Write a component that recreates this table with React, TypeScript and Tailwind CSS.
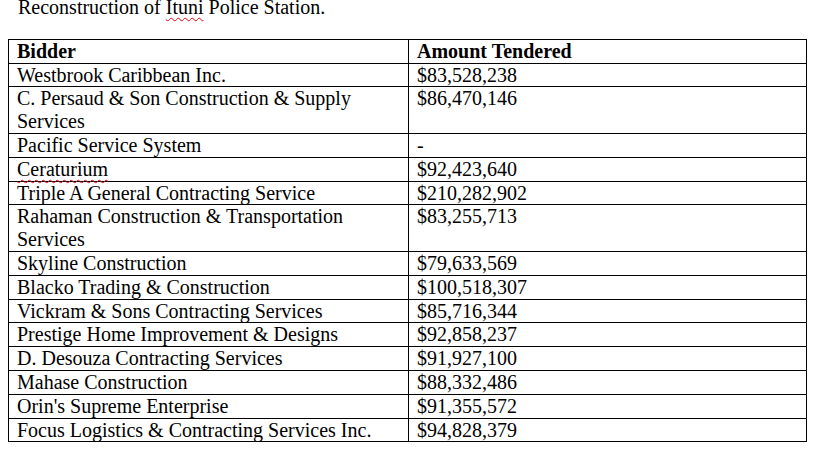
const rows: [string, string][] = [
  ["Westbrook Caribbean Inc.", "$83,528,238"],
  ["C. Persaud & Son Construction & Supply Services", "$86,470,146"],
  ["Pacific Service System", "-"],
  ["Ceraturium", "$92,423,640"],
  ["Triple A General Contracting Service", "$210,282,902"],
  ["Rahaman Construction & Transportation Services", "$83,255,713"],
  ["Skyline Construction", "$79,633,569"],
  ["Blacko Trading & Construction", "$100,518,307"],
  ["Vickram & Sons Contracting Services", "$85,716,344"],
  ["Prestige Home Improvement & Designs", "$92,858,237"],
  ["D. Desouza Contracting Services", "$91,927,100"],
  ["Mahase Construction", "$88,332,486"],
  ["Orin's Supreme Enterprise", "$91,355,572"],
  ["Focus Logistics & Contracting Services Inc.", "$94,828,379"],
];

const squiggle = "underline decoration-wavy decoration-red-600 decoration-1 underline-offset-[3px]";

export default function App() {
  return (
    <div className="h-[449px] w-[817px] overflow-hidden bg-white text-[20px] leading-[22.8px] text-black font-['Liberation_Serif','Times_New_Roman',serif]">
      {/* paragraph above the table */}
      <p className="-mt-[4px] pl-[18px]">
        Reconstruction of <span className={squiggle}>Ituni</span> Police Station.
      </p>

      <table className="ml-[8px] mt-[20px] w-[799px] table-fixed border-collapse border border-black">
        <colgroup>
          <col className="w-[400px]" />
          <col />
        </colgroup>
        <thead>
          <tr>
            <th className="border border-black px-2 text-left align-top font-bold">Bidder</th>
            <th className="border border-black px-2 text-left align-top font-bold">Amount Tendered</th>
          </tr>
        </thead>
        <tbody>
          {rows.map(([bidder, amount]) => (
            <tr key={bidder}>
              <td className="border border-black px-2 align-top font-normal">
                {bidder === "Ceraturium" ? <span className={squiggle}>{bidder}</span> : bidder}
              </td>
              <td className="border border-black px-2 align-top">{amount}</td>
            </tr>
          ))}
        </tbody>
      </table>
    </div>
  );
}
